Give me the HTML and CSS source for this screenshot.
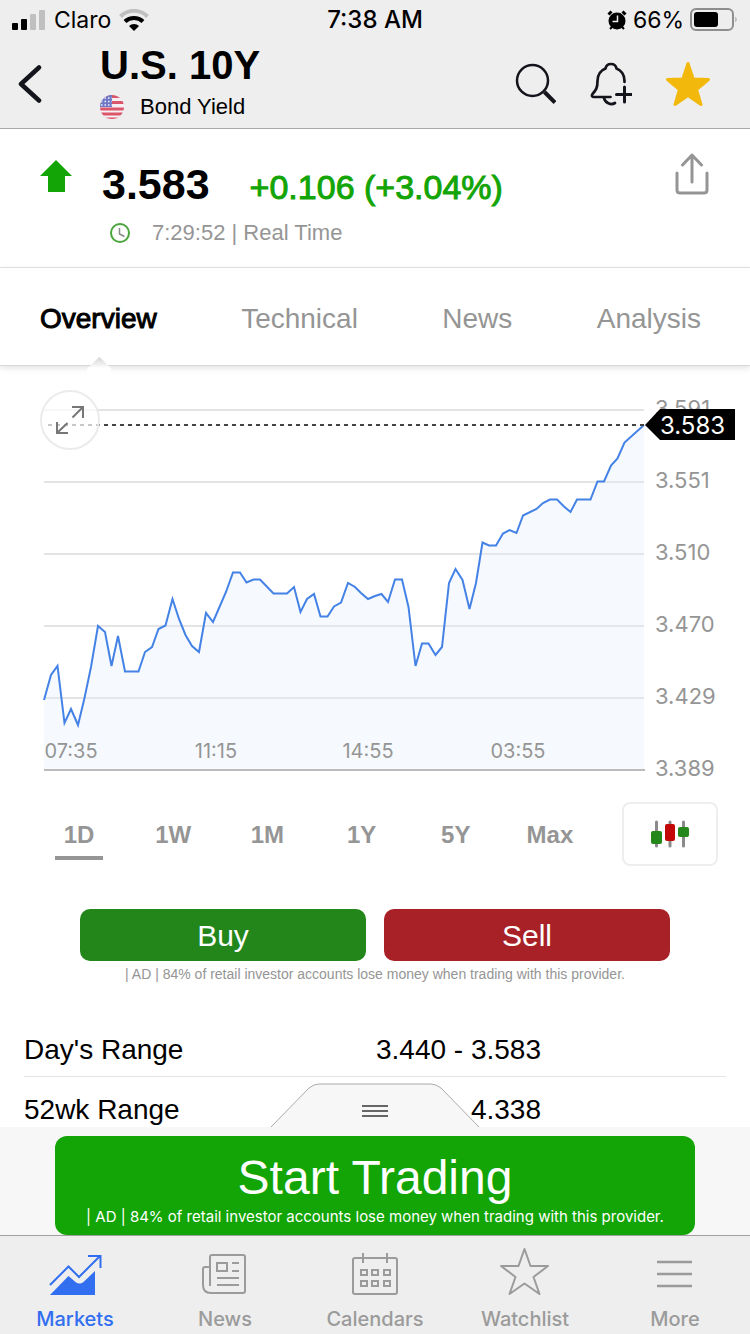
FILE: index.html
```html
<!DOCTYPE html>
<html lang="en">
<head>
    <meta charset="UTF-8">
    <meta name="viewport" content="width=device-width, initial-scale=1">
    <title>U.S. 10Y Bond Yield</title>
    <link rel="stylesheet" href="styles.css">
</head>
<body>
    <header class="top">
        <div class="status">
            <div class="status-left">
                <svg width="34" height="20" viewBox="0 0 34 20">
                    <rect x="0" y="13" width="6" height="7" rx="1"/>
                    <rect x="9" y="9" width="6" height="11" rx="1"/>
                    <g fill="#c0c0c0"><rect x="18" y="4" width="6" height="16" rx="1"/><rect x="27" y="0" width="6" height="20" rx="1"/></g>
                </svg>
                <span>Claro</span>
                <svg width="30" height="22" viewBox="0 0 30 22" fill="none" stroke-width="4">
                    <path d="M1.500 7.500a19 19 0 0 1 27 0" stroke="#c0c0c0"/>
                    <path d="M6 12.500a13 13 0 0 1 18 0" stroke="#000"/>
                    <path d="M10 17a7 7 0 0 1 10 0l-5 5z" fill="#000"/>
                </svg>
            </div>
            <span class="clock">7:38 AM</span>
            <div class="status-right">
                <svg width="20" height="20" viewBox="0 0 20 20">
                    <circle cx="10" cy="11" r="8.500"/>
                    <path d="M1.500 4.500l3-3M18.500 4.500l-3-3" stroke="#000" stroke-width="3"/>
                    <path d="M3 19l3-3M17 19l-3-3" stroke="#000" stroke-width="2"/>
                    <path d="M10.500 5.500v6H5.500" fill="none" stroke="#eee" stroke-width="1.500"/>
                </svg>
                <span>66%</span>
                <svg width="48" height="24" viewBox="0 0 48 24">
                    <rect x="1" y="1" width="42" height="21" rx="5" fill="none" stroke="#8e8e8e" stroke-width="2"/>
                    <rect x="4" y="4" width="24" height="15" rx="3"/>
                    <path d="M45.500 8.500q2 3 0 6z" fill="#8e8e8e"/>
                </svg>
            </div>
        </div>
        <div class="nav">
            <button class="icon-btn back" aria-label="Back">
                <svg width="26" height="40" viewBox="0 0 26 40" fill="none" stroke="#14141c" stroke-width="4.500" stroke-linecap="round" stroke-linejoin="round"><path d="M21 3.500L3 20l18 16.500"/></svg>
            </button>
            <div class="title">
                <h1>U.S. 10Y</h1>
                <div class="subtitle">
                    <svg width="24" height="24" viewBox="0 0 24 24">
                        <clipPath id="flag"><circle cx="12" cy="12" r="12"/></clipPath>
                        <g clip-path="url(#flag)">
                            <path fill="#f6f0f2" d="M0 0h24v24H0z"/>
                            <path stroke="#d9566b" stroke-width="3" d="M0 1.500h24M0 7.500h24M0 14h24M0 19h24M0 24h24"/>
                            <path fill="#6f78c4" d="M0 0h12v12H0z"/>
                            <path stroke="#f0f0fa" stroke-width="1.500" stroke-dasharray="1.500 2" d="M1 3h11M1 6.500h11M1 10h11"/>
                        </g>
                    </svg>
                    <span>Bond Yield</span>
                </div>
            </div>
            <div class="actions">
                <button class="icon-btn" aria-label="Search">
                    <svg width="42" height="42" viewBox="514 63 42 42" fill="none" stroke="#14141c"><circle cx="532.500" cy="80.500" r="15.500" stroke-width="2.500"/><path d="M544.500 92l10.500 10.500" stroke-width="4"/></svg>
                </button>
                <button class="icon-btn" aria-label="Add alert">
                    <svg width="44" height="46" viewBox="589 61 44 46" fill="none" stroke="#14141c" stroke-width="2.700" stroke-linecap="round" stroke-linejoin="round">
                        <path d="M625.500 82v-1c0-7-3-10.500-8-12.500-.5-3-3-4.500-5.500-4.500s-5 1.500-5.500 4.500c-5 2-8 5.500-8 12.500 0 7-1.500 9-5 13-1.200 1.500-.5 3 1.500 3h16.500"/>
                        <path d="M605 98c1 5 7 7.500 11 5"/>
                        <path d="M617.500 94.500h15M625.500 87v15" stroke-width="3"/>
                    </svg>
                </button>
                <button class="icon-btn" aria-label="Remove from watchlist">
                    <svg width="48" height="48" viewBox="664 60 48 48" fill="#f2b90c" stroke="#f2b90c" stroke-width="3" stroke-linejoin="round"><path d="M688 63.500l5.200 15.500 15.300 .5-12 10 4.500 15-13-9-13 9 4.500-15-12-10 15.300-.5z"/></svg>
                </button>
            </div>
        </div>
    </header>

    <section class="quote">
        <svg class="arrow" width="32" height="32" viewBox="0 0 32 32" fill="#13a406"><path d="M16 0l16 16h-7v16H8V16H0z"/></svg>
        <div class="quote-body">
            <div class="quote-price">
                <strong>3.583</strong>
                <span class="change">+0.106 (+3.04%)</span>
            </div>
            <div class="quote-time">
                <svg width="20" height="20" viewBox="0 0 20 20" fill="none"><circle cx="10" cy="10" r="9" stroke="#4aa63c" stroke-width="2"/><path d="M9.500 5v6l5 2.500" stroke="#888" stroke-width="1.500"/></svg>
                <span>7:29:52 | Real Time</span>
            </div>
        </div>
        <button class="icon-btn share" aria-label="Share">
            <svg width="34" height="42" viewBox="0 0 34 42" fill="none" stroke="#959595" stroke-width="3" stroke-linecap="round" stroke-linejoin="round"><path d="M2 20v17q0 3 3 3h24q3 0 3-3V20M17 29V2M7.500 12L17 2l9.500 10"/></svg>
        </button>
    </section>

    <nav class="tabs">
        <a class="tab active" href="#overview">Overview</a>
        <a class="tab" href="#technical">Technical</a>
        <a class="tab" href="#news">News</a>
        <a class="tab" href="#analysis">Analysis</a>
    </nav>

    <main id="overview">
        <div class="chart">
            <svg class="chart-svg" viewBox="0 366 750 424">
                <!-- grid -->
                <path class="grid" d="M44 410h600M44 482h600M44 554h600M44 626h600M44 698h600"/>
                <!-- price line -->
                <path class="area" d="M44 700L51 675L57.500 666L64.500 723L71 709L78 725L84.500 698L91 667L98 626L105 632L111.500 666L118 636L125 671.500H138.500L145 652L152 647L158.500 629L165.500 625.500L172.500 599L179 619L185.500 635L192 646L199 652L206 613L213 622L226 592L233 572.500H240L246.500 582.500L253.500 579.500H260L273.500 593.500H287L294 587L300.500 612L307 599L314 594L320.500 616.500H327.500L334 606.500L341 602.500L348 583L355 587L361 593L368 599L375 596L381.500 594L388 602L395 579.500H402L408.500 607L415.500 666L422 643.500H428.500L435.500 655L442 647L449 583L455.500 569L462.500 580L469.500 609L476 583L482.500 542.500L489 545.500H496L503 533.500L509.500 530L516.500 533L523 515.500L536.500 509L543 503L550 499.500H557L564 506.500L570.500 512L577 499.500H590.500L597.500 481.500H604L611 465.500L617.500 458.500L624.500 442.500L644 425V770H44Z"/>
                <path class="line" d="M44 700L51 675L57.500 666L64.500 723L71 709L78 725L84.500 698L91 667L98 626L105 632L111.500 666L118 636L125 671.500H138.500L145 652L152 647L158.500 629L165.500 625.500L172.500 599L179 619L185.500 635L192 646L199 652L206 613L213 622L226 592L233 572.500H240L246.500 582.500L253.500 579.500H260L273.500 593.500H287L294 587L300.500 612L307 599L314 594L320.500 616.500H327.500L334 606.500L341 602.500L348 583L355 587L361 593L368 599L375 596L381.500 594L388 602L395 579.500H402L408.500 607L415.500 666L422 643.500H428.500L435.500 655L442 647L449 583L455.500 569L462.500 580L469.500 609L476 583L482.500 542.500L489 545.500H496L503 533.500L509.500 530L516.500 533L523 515.500L536.500 509L543 503L550 499.500H557L564 506.500L570.500 512L577 499.500H590.500L597.500 481.500H604L611 465.500L617.500 458.500L624.500 442.500L644 425"/>
                <path class="axis" d="M44 770h601"/>
                <path class="last" d="M48 425h596"/>
                <g class="y-labels">
                    <text x="655" y="416">3.591</text>
                    <text x="655" y="488">3.551</text>
                    <text x="655" y="560">3.510</text>
                    <text x="655" y="632">3.470</text>
                    <text x="655" y="704">3.429</text>
                    <text x="655" y="776">3.389</text>
                </g>
                <g class="x-labels">
                    <text x="71" y="758">07:35</text>
                    <text x="216" y="758">11:15</text>
                    <text x="368" y="758">14:55</text>
                    <text x="518" y="758">03:55</text>
                </g>
                <!-- last price tag -->
                <path d="M645 425l15-16h75v31h-75z"/>
                <text class="tag" x="660" y="434">3.583</text>
            </svg>
            <button class="expand" aria-label="Full screen">
                <svg width="30" height="30" viewBox="0 0 30 30" fill="none" stroke="#777" stroke-width="2"><path d="M17.500 12.500L28 2M17 2h11v11M12.500 18L2 28M2 17v11h11"/></svg>
            </button>
        </div>

        <div class="ranges">
            <div class="range-list">
                <button class="range selected">1D</button>
                <button class="range">1W</button>
                <button class="range">1M</button>
                <button class="range">1Y</button>
                <button class="range">5Y</button>
                <button class="range">Max</button>
            </div>
            <button class="candles" aria-label="Candlestick chart">
                <svg width="38" height="28" viewBox="0 0 38 28">
                    <path d="M5.500 2v24M19 2v24M32.500 2v24" stroke="#8a8a8a" stroke-width="3" stroke-linecap="round"/>
                    <rect x="0" y="11" width="11" height="13" rx="2" fill="#23871a"/>
                    <rect x="14" y="4" width="10" height="17" rx="2" fill="#c30808"/>
                    <rect x="27" y="7" width="11" height="10" rx="2" fill="#23871a"/>
                </svg>
            </button>
        </div>

        <div class="trade">
            <button class="buy">Buy</button>
            <button class="sell">Sell</button>
        </div>
        <p class="ad">| AD | 84% of retail investor accounts lose money when trading with this provider.</p>

        <table class="stats">
            <tr>
                <th scope="row">Day's Range</th>
                <td>3.440 - 3.583</td>
            </tr>
            <tr>
                <th scope="row">52wk Range</th>
                <td>4.338</td>
            </tr>
        </table>
    </main>

    <footer class="bottom">
        <button class="drawer-handle" aria-label="Open drawer">
            <svg width="208" height="44" viewBox="0 0 208 44">
                <path d="M0 44L38 5q5-4 10-4h112q5 0 10 4l38 39" fill="#f7f7f7" stroke="#aaa"/>
                <path d="M91 23h26M91 28h26M91 33h26" stroke="#666" stroke-width="2"/>
            </svg>
        </button>
        <div class="promo">
            <button class="start">
                <span class="start-title">Start Trading</span>
                <span class="start-ad">| AD | 84% of retail investor accounts lose money when trading with this provider.</span>
            </button>
        </div>
        <nav class="tabbar">
            <a class="item current" href="#markets">
                <svg width="60" height="56" viewBox="0 0 60 56" fill="none" stroke="currentColor" stroke-width="2"><path d="M5 41l18.500-18.500L34 33l21-21M43 12h12.500v12"/><path d="M5 51l18.500-19 7 6q4 3 8 0L50 27v24z" fill="currentColor" stroke="none"/></svg>
                <span>Markets</span>
            </a>
            <a class="item" href="#news">
                <svg width="60" height="56" viewBox="0 0 60 56" fill="none" stroke="currentColor" stroke-width="2"><path d="M15 42V13q0-2 2-2h31q2 0 2 2v34q0 2-2 2H16c-5 0-8-3-8-8V25q0-2 2-2h5M22 19h10v8H22zM37 19h7M37 27h7M22 34h22M22 41h22"/></svg>
                <span>News</span>
            </a>
            <a class="item" href="#calendars">
                <svg width="60" height="56" viewBox="0 0 60 56" fill="none" stroke="currentColor" stroke-width="2"><rect x="8" y="14" width="44" height="36" rx="2"/><path d="M18 9v10M42 9v10M16 26h6v5h-6zM27 26h6v5h-6zM39 26h6v5h-6zM16 37h6v5h-6zM27 37h6v5h-6zM39 37h6v5h-6z"/></svg>
                <span>Calendars</span>
            </a>
            <a class="item" href="#watchlist">
                <svg width="60" height="56" viewBox="0 0 60 56" fill="none" stroke="currentColor" stroke-width="2" stroke-linejoin="round"><path d="M29.500 5l6 17H53L38.500 33l6 17-15-10.500-15 10.500 6-17L6 22h17.500z"/></svg>
                <span>Watchlist</span>
            </a>
            <a class="item" href="#more">
                <svg width="60" height="56" viewBox="0 0 60 56" fill="none" stroke="currentColor" stroke-width="2.500"><path d="M12 18h35M12 30h35M12 42h35"/></svg>
                <span>More</span>
            </a>
        </nav>
    </footer>
</body>
</html>
```
FILE: styles.css
```css
:root {
    --bar: #eeeeee;
    --gray: #959595;
    --green: #13a406;
    --blue: #326ff0;
}

* {
    box-sizing: border-box;
}

body {
    margin: 0;
    height: 100vh;
    display: flex;
    flex-direction: column;
    overflow: hidden;
    background: #fff;
    color: #000;
    font-family: 'Liberation Sans', Arial, sans-serif;
}

button {
    font: inherit;
    padding: 0;
    border: none;
    background: none;
    cursor: pointer;
}

a {
    color: inherit;
    text-decoration: none;
}

svg {
    display: block;
}

/* header */
.top {
    background: var(--bar);
    border-bottom: 1px solid #aaa;
}

.status {
    display: grid;
    grid-template-columns: 1fr auto 1fr;
    align-items: center;
    height: 40px;
    padding: 0 12px;
    font: 24px/40px Inter, sans-serif;
}

.status-left, .status-right {
    display: flex;
    align-items: center;
    gap: 8px;
    font-size: 23px;
}

.status-right {
    justify-content: flex-end;
    gap: 6px;
}

.clock {
    font-weight: 500;
}

.nav {
    display: flex;
    height: 88px;
    padding: 0 38px 0 18px;
}

.back {
    margin-right: 56px;
}

.title {
    flex: 1;
    padding-top: 3px;
}

.title h1 {
    margin: 0 0 6px;
    font-size: 40px;
    line-height: 44px;
}

.subtitle {
    display: flex;
    align-items: center;
    gap: 16px;
    font-size: 22px;
    line-height: 28px;
}

.actions {
    display: flex;
    gap: 32px;
}

/* quote */
.quote {
    display: flex;
    align-items: flex-start;
    height: 139px;
    padding: 31px 41px 0 40px;
    border-bottom: 1px solid #e4e4e4;
}

.arrow {
    margin-right: 30px;
}

.quote-body {
    flex: 1;
}

.quote-price {
    display: flex;
    align-items: baseline;
    gap: 40px;
    font-size: 43px;
    line-height: 48px;
}

.change {
    font-size: 34px;
    color: var(--green);
    -webkit-text-stroke: 1px var(--green);
}

.quote-time {
    display: flex;
    align-items: center;
    gap: 22px;
    margin-top: 8px;
    padding-left: 8px;
    font-size: 22px;
    line-height: 28px;
    color: var(--gray);
}

.share {
    margin-top: -7px;
}

/* tabs */
.tabs {
    display: flex;
    justify-content: space-between;
    padding: 0 49px 0 40px;
    border-bottom: 1px solid #d8d8d8;
    box-shadow: 0 2px 6px rgba(0, 0, 0, 0.12);
}

.tab {
    position: relative;
    padding: 35px 0 30px;
    font-size: 28px;
    line-height: 32px;
    color: var(--gray);
}

.tab.active {
    color: #000;
    -webkit-text-stroke: 1px #000;
}

.tab.active::after {
    content: '';
    position: absolute;
    left: 50%;
    bottom: -8px;
    width: 24px;
    height: 16px;
    margin-left: -11px;
    background: linear-gradient(#d4d4d4, #fff 70%);
    clip-path: polygon(50% 0, 100% 70%, 100% 100%, 0 100%, 0 70%);
}

/* chart */
main {
    flex: 1;
    min-height: 0;
    overflow: hidden;
}

.chart {
    position: relative;
}

.chart-svg {
    width: 100%;
    font-family: Inter, sans-serif;
}

.grid {
    stroke: #e4e4e4;
    stroke-width: 2;
}

.area {
    fill: #e0f0fb;
    fill-opacity: 0.3;
}

.line {
    fill: none;
    stroke: #4482e6;
    stroke-width: 2;
}

.axis {
    stroke: #bbb;
    stroke-width: 2;
}

.last {
    stroke: #444;
    stroke-width: 2;
    stroke-dasharray: 4 4;
}

.y-labels, .x-labels {
    fill: var(--gray);
    font-size: 22px;
}

.x-labels {
    font-size: 20px;
    text-anchor: middle;
}

.tag {
    fill: #fff;
    font-size: 24px;
}

.expand {
    position: absolute;
    top: 24px;
    left: 40px;
    display: grid;
    place-items: center;
    width: 60px;
    height: 60px;
    border: 2px solid #ebebeb;
    border-radius: 50%;
    background: rgba(255, 255, 255, 0.7);
}

/* range picker */
.ranges {
    display: flex;
    gap: 25px;
    padding: 12px 32px 0;
}

.range-list {
    display: flex;
    flex: 1;
}

.range {
    position: relative;
    flex: 1;
    padding-top: 2px;
    font-size: 24px;
    font-weight: bold;
    color: var(--gray);
}

.range.selected::after {
    content: '';
    position: absolute;
    left: 50%;
    bottom: 6px;
    width: 48px;
    height: 4px;
    margin-left: -24px;
    background: var(--gray);
}

.candles {
    display: grid;
    place-items: center;
    width: 96px;
    height: 64px;
    border: 2px solid #eee;
    border-radius: 8px;
}

/* buy / sell */
.trade {
    display: flex;
    gap: 18px;
    padding: 43px 80px 0;
}

.buy, .sell {
    flex: 1;
    height: 52px;
    padding-top: 2px;
    border-radius: 10px;
    font-size: 30px;
    color: #fff;
}

.buy {
    background: #23861a;
}

.sell {
    background: #a82127;
}

.ad {
    margin: 3px 0 33px;
    text-align: center;
    font-size: 14px;
    line-height: 20px;
    color: var(--gray);
}

/* stats */
.stats {
    width: calc(100% - 48px);
    margin: 0 24px;
    border-collapse: collapse;
    font-size: 28px;
    line-height: 32px;
}

.stats th, .stats td {
    padding: 17px 0 10px;
    border-bottom: 1px solid #e4e4e4;
    font-weight: normal;
    text-align: left;
}

.stats td {
    padding-right: 185px;
    text-align: right;
}

/* bottom */
.bottom {
    position: relative;
}

.drawer-handle {
    position: absolute;
    left: 50%;
    bottom: 100%;
    transform: translateX(-50%);
}

.promo {
    padding: 9px 55px 0;
    background: #f7f7f7;
}

.start {
    display: flex;
    flex-direction: column;
    align-items: center;
    width: 100%;
    height: 99px;
    padding-top: 13px;
    border-radius: 12px;
    background: var(--green);
    color: #fff;
}

.start-title {
    font-size: 48px;
    line-height: 58px;
}

.start-ad {
    font: 15px/20px Inter, sans-serif;
}

.tabbar {
    display: flex;
    height: 99px;
    padding-top: 8px;
    background: var(--bar);
    border-top: 1px solid #a0a0a0;
}

.item {
    display: flex;
    flex: 1;
    flex-direction: column;
    align-items: center;
    gap: 7px;
    font: 500 20px/24px Inter, sans-serif;
    color: #9b9b9b;
}

.item.current {
    color: var(--blue);
}
```
